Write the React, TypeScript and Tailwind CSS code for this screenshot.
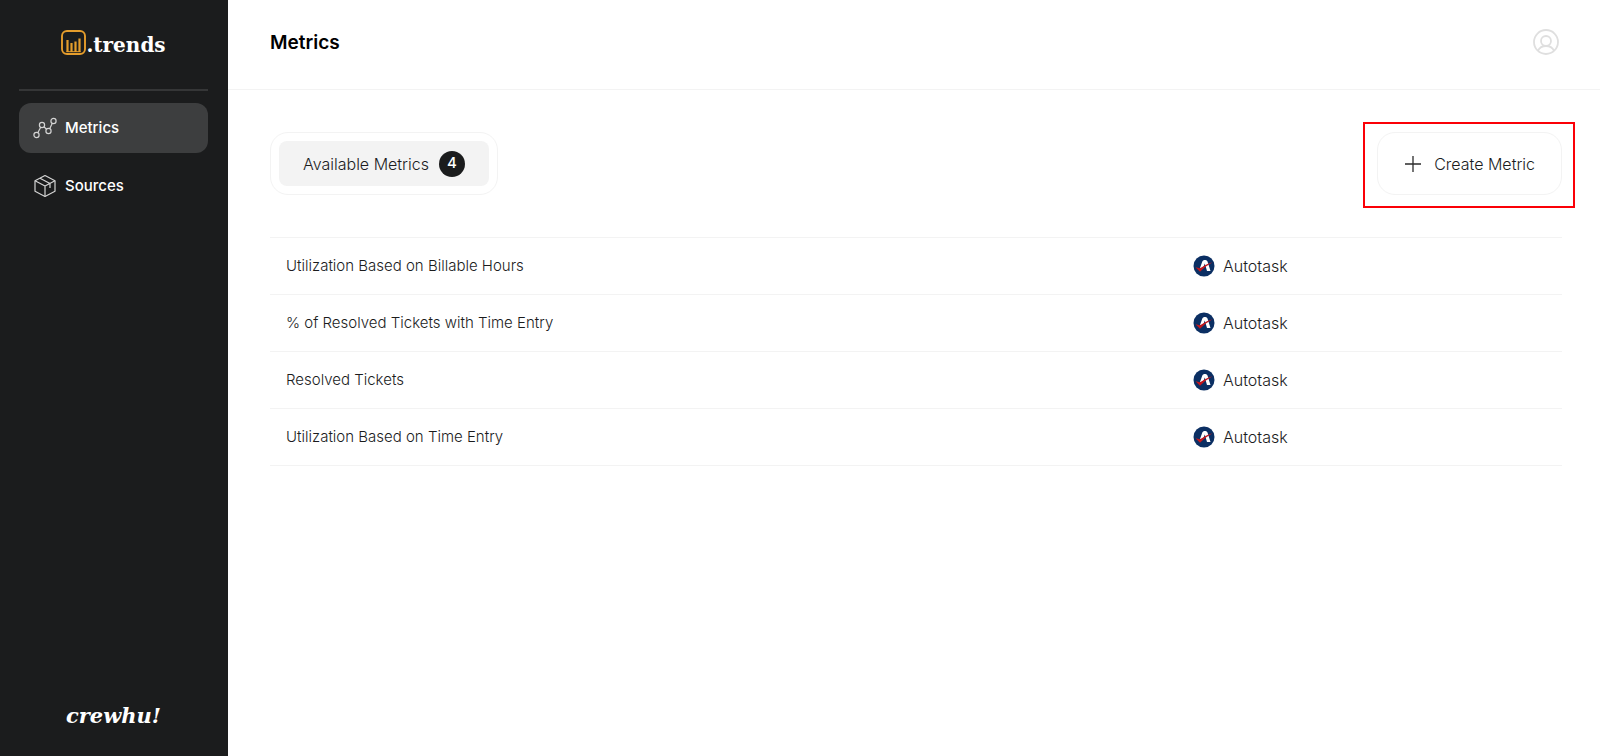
import React from 'react';

interface Metric {
  id: number;
  name: string;
  source: string;
}

const metrics: Metric[] = [
  { id: 1, name: 'Utilization Based on Billable Hours', source: 'Autotask' },
  { id: 2, name: '% of Resolved Tickets with Time Entry', source: 'Autotask' },
  { id: 3, name: 'Resolved Tickets', source: 'Autotask' },
  { id: 4, name: 'Utilization Based on Time Entry', source: 'Autotask' },
];

const TrendsIcon = () => (
  <svg viewBox="0 0 25 25" className="w-[25px] h-[25px]" fill="none" stroke="#e59d2c" aria-hidden="true">
    <rect x="1" y="1" width="23" height="23" rx="5" strokeWidth="1.9" />
    <path d="M6.500 10v12M10.500 13v9M14.500 11.500v10.500M18.500 8.500v13.500" strokeWidth="2.2" />
    <path d="M5.500 21.700h14" strokeWidth="1" />
  </svg>
);

const GraphIcon = () => (
  <svg viewBox="0 0 24 22" className="w-6 h-[22px]" fill="none" stroke="#d4d4d4" strokeWidth="1.2" aria-hidden="true">
    <circle cx="3.500" cy="18" r="2.600" />
    <circle cx="9" cy="8" r="2.600" />
    <circle cx="15.500" cy="14" r="2.600" />
    <circle cx="20.500" cy="4" r="2.600" />
    <path d="M4.800 15.700 7.700 10.300M10.900 9.800l2.700 2.400M16.700 11.700l2.600-5.400" />
  </svg>
);

const BoxIcon = () => (
  <svg viewBox="0 0 24 24" className="w-6 h-6" fill="none" stroke="#d4d4d4" strokeWidth="1.2" strokeLinejoin="round" aria-hidden="true">
    <path d="M12 1.500 22 6.700v10.600L12 22.500 2 17.300V6.700z" />
    <path d="M2 6.700l10 5.300 10-5.300M12 12v10.500M7 4.200l10 5.300v4.500" />
  </svg>
);

const UserIcon = () => (
  <svg viewBox="0 0 26 26" className="w-[26px] h-[26px]" fill="none" stroke="#dfdfdf" strokeWidth="1.800" aria-hidden="true">
    <circle cx="13" cy="13" r="12" />
    <circle cx="13" cy="12" r="5" />
    <path d="M5 21.700c1.500-3 4.500-4.700 8-4.700s6.500 1.700 8 4.700" />
  </svg>
);

const AutotaskIcon = () => (
  <svg viewBox="0 0 22 22" className="w-[22px] h-[22px] shrink-0" aria-hidden="true">
    <circle cx="11" cy="11" r="10.500" fill="#0b2f63" />
    <path d="M7 13 9.300 6.500Q9.800 5 11.300 5h1.200q1.500 0 2 1.500L17.500 16h-3.500L11.800 8.500 10 13z" fill="#fff" />
    <path d="M2.500 12.200 7 13.200Q13 8.700 19.500 7.300 12 11.500 7 16.700z" fill="#c4161c" />
  </svg>
);

export default function App() {
  return (
    <div className="flex min-h-screen bg-white font-['Inter','Open_Sans',sans-serif] text-[15px] text-[#1b1c1d]">
      <aside className="w-[228px] shrink-0 bg-[#1b1c1d] flex flex-col pl-[19px] pr-5 text-white">
        <div className="h-[91px] border-b-2 border-[#353637] flex justify-center pt-[30px]">
          <span className="flex h-[30px] items-start">
            <TrendsIcon />
            <span className="font-['DejaVu_Serif',serif] font-bold text-[20px] leading-[30px]">.trends</span>
          </span>
        </div>
        <nav className="mt-3 flex flex-col gap-2 font-medium">
          <a href="#metrics" className="flex h-[50px] items-center gap-2 rounded-xl bg-[#3d3e3f] px-[14px]">
            <GraphIcon />
            Metrics
          </a>
          <a href="#sources" className="flex h-[50px] items-center gap-2 rounded-xl px-[14px]">
            <BoxIcon />
            Sources
          </a>
        </nav>
        <div className="mt-auto pb-6 text-center font-['DejaVu_Serif',serif] text-[21px] leading-8 font-bold italic">crewhu!</div>
      </aside>

      <div className="flex-1 min-w-0">
        <header className="flex h-[90px] items-start justify-between border-b border-[#f3f3f3] pl-[42px] pr-[41px] pt-[29px]">
          <h1 className="text-[19px] leading-7 font-semibold text-black">Metrics</h1>
          <button type="button" aria-label="Account" className="cursor-pointer">
            <UserIcon />
          </button>
        </header>

        <main className="pl-[42px] pr-[38px] pt-[42px]">
          <div className="flex items-start justify-between">
            <div className="rounded-[18px] border border-[#f3f3f3] p-2">
              <button type="button" className="flex h-[45px] items-center gap-[10px] rounded-lg bg-[#f3f3f3] px-6 text-base font-light cursor-pointer">
                Available Metrics
                <span className="flex size-[26px] items-center justify-center rounded-full bg-[#1b1c1d] text-[15px] font-medium text-white">4</span>
              </button>
            </div>
            <div className="relative">
              <button type="button" className="flex h-[63px] items-center gap-3 rounded-[18px] border border-[#f3f3f3] px-[26px] text-base font-light cursor-pointer">
                <svg viewBox="0 0 18 18" className="size-[18px]" fill="none" stroke="#2b2b2b" aria-hidden="true">
                  <path d="M9 1v16M1 9h16" strokeWidth="1.300" />
                </svg>
                Create Metric
              </button>
              <div className="pointer-events-none absolute -left-[14px] -right-[13px] -top-[10px] -bottom-[13px] border-2 border-[#fb0007]" />
            </div>
          </div>

          <table className="mt-[42px] w-full table-fixed border-collapse text-left font-light">
            <tbody>
              {metrics.map((metric) => (
                <tr key={metric.id} className="h-[57px] border-y border-[#f3f3f3]">
                  <td className="pl-4">{metric.name}</td>
                  <td className="w-[369px]">
                    <span className="flex items-center gap-2 text-base">
                      <AutotaskIcon />
                      {metric.source}
                    </span>
                  </td>
                </tr>
              ))}
            </tbody>
          </table>
        </main>
      </div>
    </div>
  );
}
